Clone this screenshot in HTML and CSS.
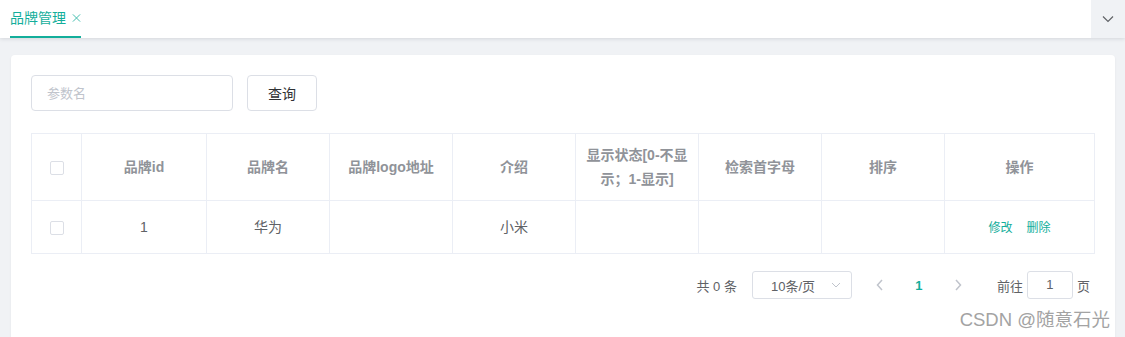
FILE: index.html
```html
<!DOCTYPE html>
<html>
    <head>
        <meta charset="utf-8">
        <title>品牌管理</title>
        <link rel="stylesheet" href="styles.css">
    </head>
    <body>
        <div class="tabbar">
            <div class="tabs">
                <div class="tab active">品牌管理
                    <svg class="close" width="10" height="10" viewBox="0 0 10 10"><path d="M1 1 L9 9 M9 1 L1 9" fill="none" stroke="#13ae9b" stroke-width="1.1"/></svg>
                </div>
            </div>
            <div class="tab-more">
                <svg width="12" height="8" viewBox="0 0 12 8"><path d="M1 1.5 L6 6.5 L11 1.5" fill="none" stroke="#606266" stroke-width="1.2"/></svg>
            </div>
        </div>
        <div class="main">
            <div class="card">
                <form class="search">
                    <input type="text" class="input" placeholder="参数名">
                    <button type="button" class="btn">查询</button>
                </form>
                <table class="grid">
                    <colgroup>
                        <col style="width:50px"><col style="width:125px"><col style="width:123px"><col style="width:123px"><col style="width:123px"><col style="width:123px"><col style="width:123px"><col style="width:123px"><col>
                    </colgroup>
                    <thead>
                        <tr>
                            <th><span class="check"></span></th>
                            <th>品牌id</th>
                            <th>品牌名</th>
                            <th>品牌logo地址</th>
                            <th>介绍</th>
                            <th>显示状态[0-不显示；1-显示]</th>
                            <th>检索首字母</th>
                            <th>排序</th>
                            <th>操作</th>
                        </tr>
                    </thead>
                    <tbody>
                        <tr>
                            <td><span class="check"></span></td>
                            <td>1</td>
                            <td>华为</td>
                            <td></td>
                            <td>小米</td>
                            <td></td>
                            <td></td>
                            <td></td>
                            <td><a class="link">修改</a><a class="link">删除</a></td>
                        </tr>
                    </tbody>
                </table>
                <div class="pager">
                    <span class="total">共 0 条</span>
                    <div class="sizes">10条/页
                        <svg width="10" height="6" viewBox="0 0 10 6"><path d="M1 1 L5 5 L9 1" fill="none" stroke="#c0c4cc" stroke-width="1"/></svg>
                    </div>
                    <span class="arrow">
                        <svg width="8" height="12" viewBox="0 0 8 12"><path d="M6 1 L1.5 6 L6 11" fill="none" stroke="#c0c4cc" stroke-width="1.5"/></svg>
                    </span>
                    <span class="num">1</span>
                    <span class="arrow">
                        <svg width="8" height="12" viewBox="0 0 8 12"><path d="M2 1 L6.5 6 L2 11" fill="none" stroke="#c0c4cc" stroke-width="1.5"/></svg>
                    </span>
                    <span class="jump">前往 <span class="jump-box">1</span> 页</span>
                </div>
                <div class="mark">CSDN @随意石光</div>
            </div>
        </div>
    </body>
</html>
```

FILE: styles.css
```css
*{box-sizing:border-box;}
body,html{
    margin: 0;
    width:100%;
    height:100%;
    font-family: "Liberation Sans", "Noto Sans CJK SC", sans-serif;
    font-size: 14px;
    color: #606266;
    background-color: #f0f2f5;
    overflow: hidden;
}
.tabbar{display:flex; height:38px; background:#fff; box-shadow:0 1px 4px rgba(0,21,41,.12); position:relative; z-index:1;}
.tabs{flex:1; display:flex; padding-left:10px;}
.tab{height:38px; line-height:36px; font-size:14px; color:#13ae9b; border-bottom:2px solid #13ae9b; width:71px; white-space:nowrap; display:flex; align-items:center; gap:6px;}
.tab .close{opacity:.8;}
.tab-more{width:34px; display:flex; align-items:center; justify-content:center; background:#f0f2f5;}
.main{padding:17px 10px 0 11px;}
.card{background:#fff; border-radius:4px 4px 0 0; padding:20px; height:282px; box-shadow:0 1px 3px rgba(0,0,0,.05);}
.search{display:flex; gap:14px; margin:0 0 22px;}
.input{width:202px; height:36px; border:1px solid #dcdfe6; border-radius:4px; padding:0 15px; font:inherit; font-size:13px; color:#606266; outline:none;}
.input::placeholder{color:#c0c4cc;}
.btn{width:70px; height:36px; border:1px solid #dcdfe6; border-radius:4px; background:#fff; font:inherit; font-size:14px; color:#303133;}
.grid{width:1064px; border-collapse:collapse; table-layout:fixed; border:1px solid #ebeef5;}
.grid th,.grid td{border:1px solid #ebeef5; text-align:center; padding:0 10px; line-height:24px;}
.grid th{height:67px; color:#909399; font-weight:bold; font-size:14px;}
.grid td{height:53px; font-size:14px; color:#606266;}
.check{display:inline-block; width:14px; height:14px; border:1px solid #dcdfe6; border-radius:2px; vertical-align:middle;}
.link{color:#13ae9b; font-size:12px; margin:0 7px; cursor:pointer;}
.pager{display:flex; justify-content:flex-end; align-items:center; margin-top:17px; padding-right:5px; font-size:13px; color:#606266; height:28px;}
.total{margin-right:15px;}
.sizes{width:100px; height:28px; border:1px solid #dcdfe6; border-radius:3px; display:flex; align-items:center; justify-content:space-between; padding:0 10px 0 18px; margin-right:13px;}
.arrow{width:30px; display:flex; justify-content:center;}
.num{width:48px; text-align:center; color:#13ae9b; font-weight:bold;}
.jump{margin-left:24px; display:flex; align-items:center;}
.jump-box{display:inline-block; width:46px; height:28px; line-height:26px; border:1px solid #dcdfe6; border-radius:3px; text-align:center; margin:0 4px;}
.mark{text-align:right; font-size:18.5px; color:#a3a3a3; margin-top:6px; margin-right:-15px;}
```
